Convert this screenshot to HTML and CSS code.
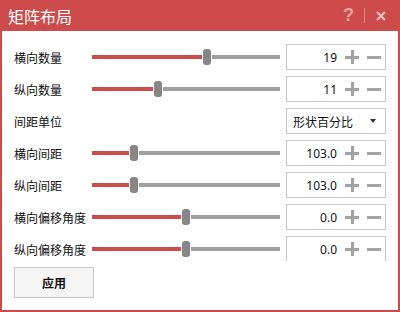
FILE: index.html
```html
<!DOCTYPE html>
<html lang="zh-CN">
<head>
<meta charset="UTF-8">
<title>矩阵布局</title>
<link rel="stylesheet" href="styles.css">
</head>
<body>
<div class="dialog">
    <div class="titlebar">
        <span class="title">矩阵布局</span>
        <span class="help">?</span>
        <span class="sep"></span>
        <svg class="close" width="10" height="10" viewBox="0 0 10 10"><path d="M1 1L9 9M9 1L1 9" stroke="#f0bcbc" stroke-width="2.2"/></svg>
    </div>
    <div class="content">
        <div class="row">
            <span class="label">横向数量</span>
            <div class="slider"><div class="fill" style="width:110px"></div><div class="thumb"></div><div class="rest"></div></div>
            <div class="spin"><span class="value">19</span><span class="plus"></span><span class="minus"></span></div>
        </div>
        <div class="row">
            <span class="label">纵向数量</span>
            <div class="slider"><div class="fill" style="width:61px"></div><div class="thumb"></div><div class="rest"></div></div>
            <div class="spin"><span class="value">11</span><span class="plus"></span><span class="minus"></span></div>
        </div>
        <div class="row">
            <span class="label">间距单位</span>
            <div class="slider"></div>
            <div class="select"><span class="value">形状百分比</span><span class="arrow"></span></div>
        </div>
        <div class="row">
            <span class="label">横向间距</span>
            <div class="slider"><div class="fill" style="width:37px"></div><div class="thumb"></div><div class="rest"></div></div>
            <div class="spin"><span class="value">103.0</span><span class="plus"></span><span class="minus"></span></div>
        </div>
        <div class="row">
            <span class="label">纵向间距</span>
            <div class="slider"><div class="fill" style="width:37px"></div><div class="thumb"></div><div class="rest"></div></div>
            <div class="spin"><span class="value">103.0</span><span class="plus"></span><span class="minus"></span></div>
        </div>
        <div class="row">
            <span class="label">横向偏移角度</span>
            <div class="slider"><div class="fill" style="width:89px"></div><div class="thumb"></div><div class="rest"></div></div>
            <div class="spin"><span class="value">0.0</span><span class="plus"></span><span class="minus"></span></div>
        </div>
        <div class="row">
            <span class="label">纵向偏移角度</span>
            <div class="slider"><div class="fill" style="width:89px"></div><div class="thumb"></div><div class="rest"></div></div>
            <div class="spin"><span class="value">0.0</span><span class="plus"></span><span class="minus"></span></div>
        </div>
    </div>
    <div class="footer">
        <button class="apply">应用</button>
    </div>
</div>
</body>
</html>
```

FILE: styles.css
```css
html, body {
    margin: 0;
    padding: 0;
}
body {
    width: 400px;
    height: 312px;
    font-family: "Noto Sans", "Noto Sans CJK SC", sans-serif;
    font-size: 12px;
    color: #111;
    background: #fff;
}
.dialog {
    box-sizing: border-box;
    width: 400px;
    height: 312px;
    border: 2px solid #cd4b4b;
    border-top: none;
    display: flex;
    flex-direction: column;
}
.titlebar {
    height: 31px;
    margin: 0 -2px;
    background: #cd4b4b;
    display: flex;
    align-items: center;
    padding: 0 14px 0 8px;
    color: #fff;
}
.title {
    font-family: "Noto Sans CJK SC", sans-serif;
    font-size: 16px;
    flex: 1;
}
.help {
    color: #eba5a5;
    font-family: "Liberation Sans", sans-serif;
    font-weight: bold;
    font-size: 18px;
}
.sep {
    width: 1px;
    height: 15px;
    background: #dd8585;
    margin: 0 11px 0 10px;
}
.close {
    display: block;
}
.content {
    height: 230px;
    overflow: hidden;
    padding: 13px 0 0 12px;
    box-sizing: border-box;
}
.row {
    display: flex;
    align-items: center;
    height: 26px;
    margin-bottom: 6px;
}
.label {
    width: 78px;
    font-family: "Noto Sans CJK SC", sans-serif;
}
.slider {
    width: 188px;
    display: flex;
    align-items: center;
    margin-right: 6px;
}
.fill {
    height: 4px;
    background: #cd4b4b;
}
.thumb {
    width: 8px;
    height: 16px;
    border-radius: 3px;
    background: #868686;
    margin: 0 1px;
}
.rest {
    flex: 1;
    height: 4px;
    background: #a0a0a0;
}
.spin, .select {
    box-sizing: border-box;
    width: 100px;
    height: 26px;
    border: 1px solid #cacaca;
    display: flex;
    align-items: center;
}
.spin {
    padding-right: 4px;
}
.spin .value {
    flex: 1;
    text-align: right;
}
.plus, .minus {
    position: relative;
    width: 14px;
    height: 14px;
    margin-left: 8px;
}
.plus::before, .plus::after, .minus::before {
    content: "";
    position: absolute;
    background: #a3a3a3;
}
.plus::before, .minus::before {
    left: 0;
    right: 0;
    top: 6px;
    height: 3px;
}
.plus::after {
    top: 0;
    bottom: 0;
    left: 6px;
    width: 3px;
}
.select {
    padding: 0 9px 0 6px;
}
.select .value {
    flex: 1;
    font-family: "Noto Sans CJK SC", sans-serif;
}
.arrow {
    width: 0;
    height: 0;
    border-left: 3px solid transparent;
    border-right: 3px solid transparent;
    border-top: 4px solid #333;
}
.footer {
    padding: 6px 0 0 12px;
}
.apply {
    width: 80px;
    height: 31px;
    background: #f5f5f5;
    border: 1px solid #c8c8c8;
    font-family: "Noto Sans CJK SC", sans-serif;
    font-weight: bold;
    font-size: 12px;
    color: #111;
    padding: 0;
}
```
